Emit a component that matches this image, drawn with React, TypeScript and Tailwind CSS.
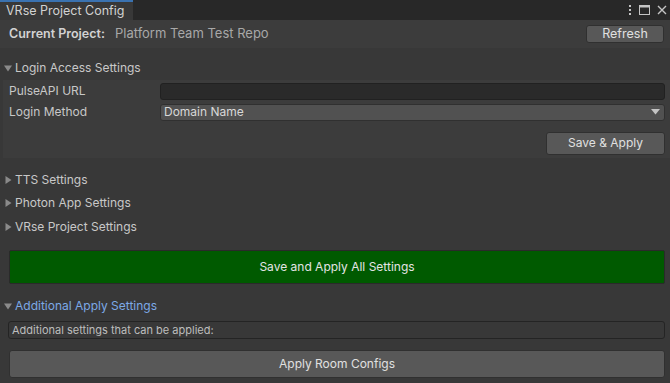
import { useState } from "react";

type Foldout = { label: string; open: boolean };

const FOLDOUTS: Foldout[] = [
  { label: "TTS Settings", open: false },
  { label: "Photon App Settings", open: false },
  { label: "VRse Project Settings", open: false },
];

function Arrow({ open }: { open: boolean }) {
  return open ? (
    <svg width="8" height="8" viewBox="0 0 8 8" className="shrink-0">
      <path d="M0 1.5 L8 1.5 L4 7.5 Z" fill="#8a8a8a" />
    </svg>
  ) : (
    <svg width="8" height="8" viewBox="0 0 8 8" className="shrink-0">
      <path d="M1.5 0 L7.5 4 L1.5 8 Z" fill="#8a8a8a" />
    </svg>
  );
}

function FoldoutHeader({ label, open, blue }: { label: string; open: boolean; blue?: boolean }) {
  return (
    <div className="flex items-center gap-[3px] h-[23.5px] pl-[4px] shrink-0">
      <Arrow open={open} />
      <span className={blue ? "text-[#7ca9e6]" : "text-[#c8c8c8]"}>{label}</span>
    </div>
  );
}

export default function App() {
  const [method] = useState("Domain Name");

  return (
    <div
      className="w-[670px] h-[383px] bg-[#383838] text-[12px] text-[#c8c8c8] overflow-hidden flex flex-col"
      style={{ fontFamily: "Inter, 'Noto Sans', sans-serif" }}
    >
      {/* tab strip */}
      <div className="h-[20px] bg-[#282828] flex items-stretch shrink-0">
        <div className="w-[133px] bg-[#383838] border-t-2 border-[#3a72b0] flex items-center pl-[6px] text-[12.5px] text-[#d2d2d2]">
          VRse Project Config
        </div>
        <div className="flex-1" />
        <div className="flex items-center gap-[7px] pr-[3px]">
          <svg width="4" height="12" viewBox="0 0 4 12">
            <rect x="1" y="1" width="2" height="2" fill="#c4c4c4" />
            <rect x="1" y="5" width="2" height="2" fill="#c4c4c4" />
            <rect x="1" y="9" width="2" height="2" fill="#c4c4c4" />
          </svg>
          <svg width="11" height="10" viewBox="0 0 11 10">
            <rect x="0.5" y="0.5" width="10" height="9" fill="none" stroke="#c4c4c4" />
            <rect x="0.5" y="0.5" width="10" height="2" fill="#c4c4c4" />
          </svg>
          <svg width="10" height="10" viewBox="0 0 10 10">
            <path d="M1 1 L9 9 M9 1 L1 9" stroke="#c4c4c4" strokeWidth="1.4" />
          </svg>
        </div>
      </div>

      {/* current project */}
      <div className="h-[28px] bg-[#3c3c3c] flex items-center pl-[9px] pr-[6px] shrink-0">
        <span className="font-semibold text-[12.5px] text-[#d2d2d2]">Current Project:</span>
        <span className="ml-[10px] text-[#a8a8a8] text-[13px]">Platform Team Test Repo</span>
        <div className="flex-1" />
        <button className="w-[78px] h-[18px] bg-[#585858] border border-[#303030] rounded-[3px] text-[#e0e0e0] text-[12.5px] leading-none">
          Refresh
        </button>
      </div>

      <div className="h-[8px] shrink-0" />

      <FoldoutHeader label="Login Access Settings" open />

      <div className="ml-[3px] bg-[#3c3c3c] pl-[6px] pr-[5px] pt-[3px] pb-[3px] flex flex-col gap-[4px] shrink-0">
        <div className="flex items-center h-[17px]">
          <span className="w-[151px]">PulseAPI URL</span>
          <div className="flex-1 h-[17px] bg-[#2a2a2a] border border-[#212121] rounded-[3px]" />
        </div>
        <div className="flex items-center h-[17px]">
          <span className="w-[151px]">Login Method</span>
          <div className="flex-1 h-[17px] bg-[#515151] border border-[#303030] rounded-[3px] flex items-center pl-[3px] pr-[4px] text-[#d8d8d8]">
            <span className="flex-1">{method}</span>
            <svg width="9" height="6" viewBox="0 0 9 6">
              <path d="M0 0 L9 0 L4.5 5.5 Z" fill="#c4c4c4" />
            </svg>
          </div>
        </div>
        <div className="flex justify-end mt-[7px]">
          <button className="w-[119px] h-[23px] bg-[#585858] border border-[#303030] rounded-[3px] text-[#e0e0e0]">
            Save &amp; Apply
          </button>
        </div>
      </div>

      <div className="h-[10.5px] shrink-0" />

      {FOLDOUTS.map((f) => (
        <FoldoutHeader key={f.label} label={f.label} open={f.open} />
      ))}

      <div className="pl-[9px] pr-[5px] mt-[11px] shrink-0">
        <button className="w-full h-[34px] bg-[#005a00] border border-[#2a2a2a] rounded-[2px] text-[#e4e4e4]">
          Save and Apply All Settings
        </button>
      </div>

      <div className="h-[11px] shrink-0" />

      <FoldoutHeader label="Additional Apply Settings" open blue />

      <div className="pl-[8px] pr-[5px] mt-[3px] shrink-0">
        <div className="h-[18px] bg-[#383838] border border-[#242424] rounded-[3px] flex items-center pl-[3px] text-[11px] text-[#bdbdbd]">
          Additional settings that can be applied:
        </div>
      </div>

      <div className="pl-[9px] pr-[5px] mt-[11px] shrink-0">
        <button className="w-full h-[28px] bg-[#585858] border border-[#303030] rounded-[3px] text-[#e0e0e0]">
          Apply Room Configs
        </button>
      </div>
    </div>
  );
}
